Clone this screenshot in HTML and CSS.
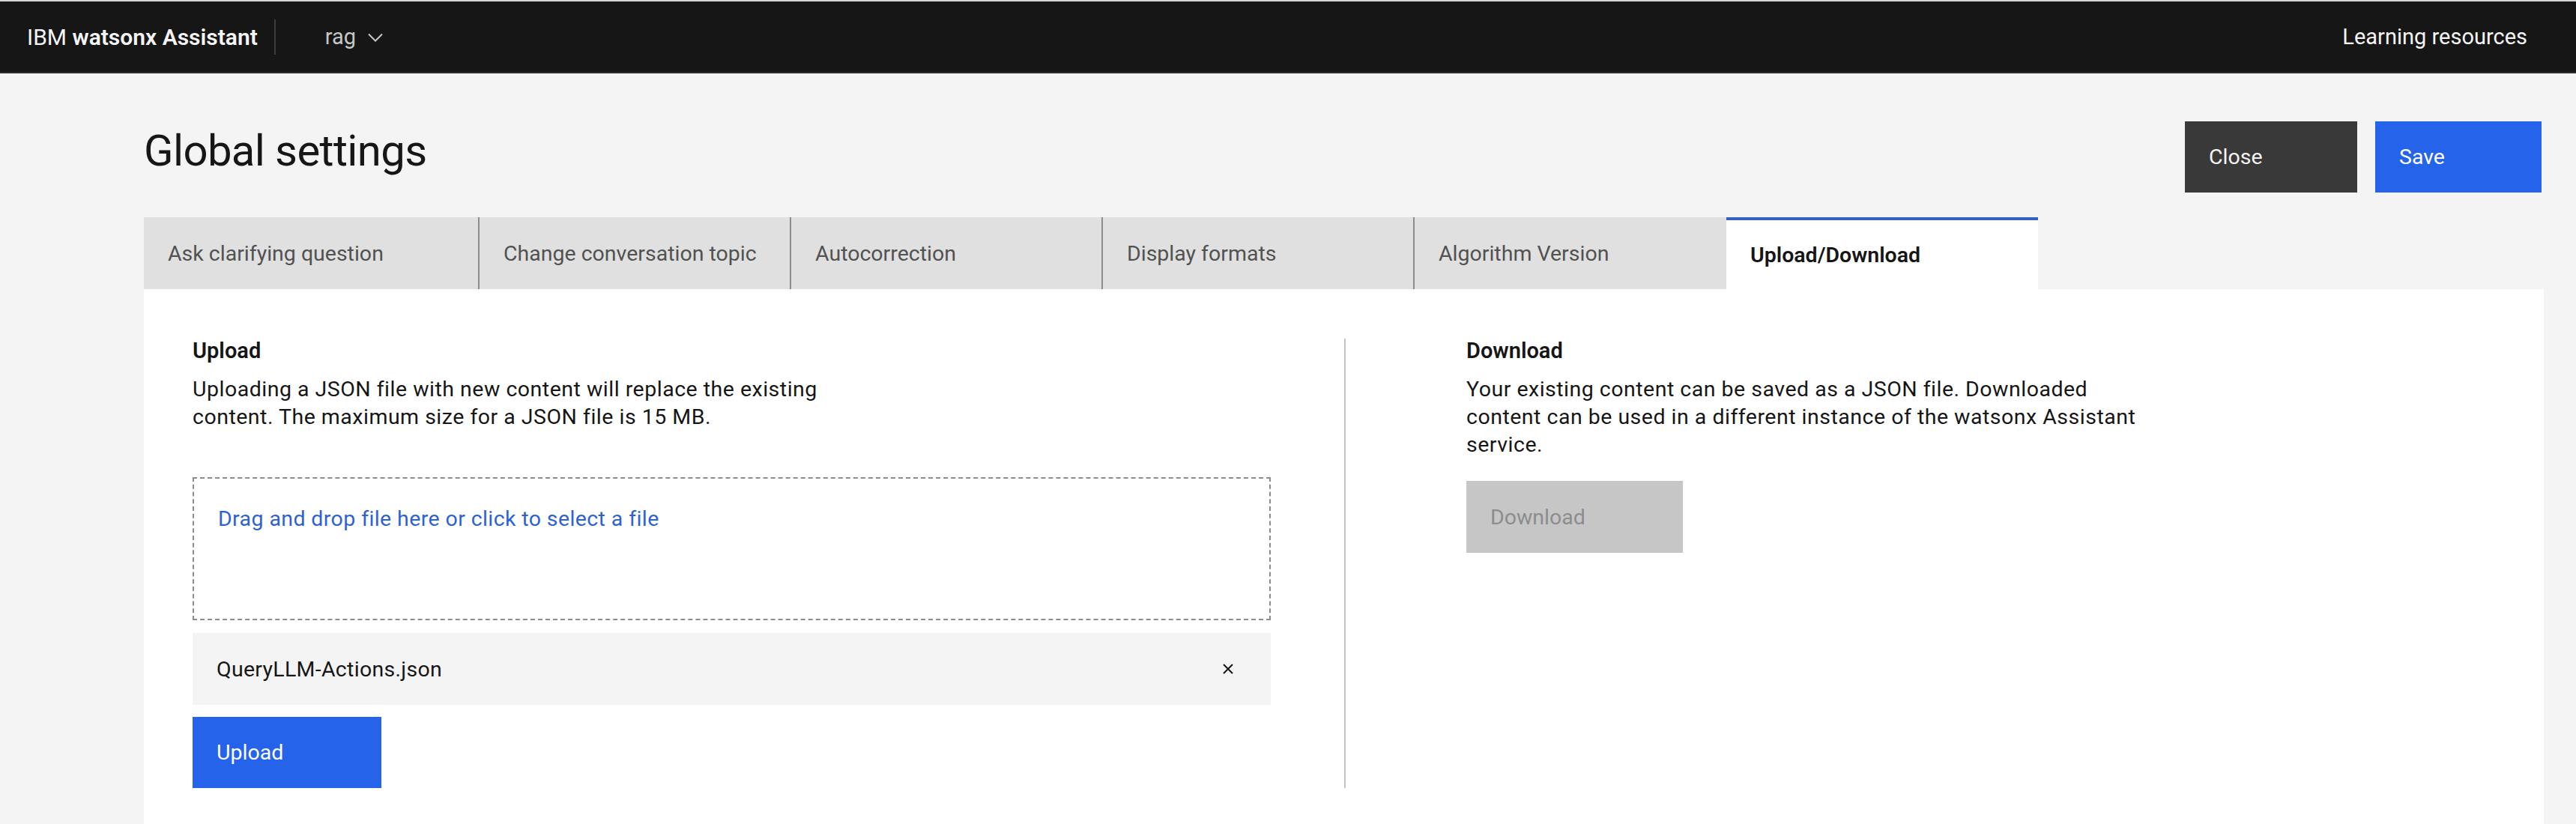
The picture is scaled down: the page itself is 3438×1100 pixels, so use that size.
FILE: index.html
```html
<!DOCTYPE html>
<html lang="en">
<head>
<meta charset="utf-8">
<title>Global settings</title>
<link rel="stylesheet" href="styles.css">
</head>
<body>
<header class="topbar">
  <div class="brand"><span class="brand-ibm">IBM</span> <span class="brand-name">watsonx Assistant</span></div>
  <div class="brand-divider"></div>
  <div class="instance">rag
    <svg class="chev" width="20" height="12" viewBox="0 0 20 12"><polyline points="1,1.5 10,10.5 19,1.5" fill="none" stroke="#c6c6c6" stroke-width="2"/></svg>
  </div>
  <div class="spacer"></div>
  <div class="learn">Learning resources</div>
</header>
<main class="page">
  <div class="page-head">
    <h1 class="title">Global settings</h1>
    <div class="actions">
      <button class="btn btn-dark">Close</button>
      <button class="btn btn-primary btn-save">Save</button>
    </div>
  </div>
  <nav class="tabs">
    <div class="tab tab-first">Ask clarifying question</div>
    <div class="tab">Change conversation topic</div>
    <div class="tab">Autocorrection</div>
    <div class="tab">Display formats</div>
    <div class="tab tab-last">Algorithm Version</div>
    <div class="tab tab-active">Upload/Download</div>
  </nav>
  <section class="panel">
    <div class="col col-upload">
      <h2 class="sec-title">Upload</h2>
      <p class="sec-text">Uploading a JSON file with new content will replace the existing content. The maximum size for a JSON file is 15 MB.</p>
      <div class="dropzone"><span class="drop-link">Drag and drop file here or click to select a file</span></div>
      <div class="file-item">
        <span class="file-name">QueryLLM-Actions.json</span>
        <svg class="file-x" width="18" height="18" viewBox="0 0 18 18"><path d="M3 3 L15 15 M15 3 L3 15" stroke="#161616" stroke-width="2" fill="none"/></svg>
      </div>
      <button class="btn btn-primary btn-upload">Upload</button>
    </div>
    <div class="col col-download">
      <h2 class="sec-title">Download</h2>
      <p class="sec-text">Your existing content can be saved as a JSON file. Downloaded content can be used in a different instance of the watsonx Assistant service.</p>
      <button class="btn btn-disabled">Download</button>
    </div>
  </section>
</main>
</body>
</html>
```
FILE: styles.css
```css
* { box-sizing: border-box; }
html, body { margin: 0; padding: 0; }
body {
  background: #f4f4f4;
  font-family: Roboto, "Liberation Sans", Arial, sans-serif;
  color: #161616;
  border-top: 2px solid #d6d6d6;
  overflow: hidden;
}
.topbar {
  height: 96px;
  background: #161616;
  border-bottom: 2px solid #2e2e2e;
  display: flex;
  align-items: center;
  color: #f4f4f4;
}
.brand {
  padding-left: 36px;
  font-size: 30px;
  color: #f4f4f4;
  white-space: nowrap;
}
.brand-name { font-weight: 600; }
.brand-divider {
  width: 2px;
  height: 47px;
  background: #3d3d3d;
  margin-left: 22px;
}
.instance {
  margin-left: 66px;
  font-size: 29px;
  color: #c6c6c6;
  display: flex;
  align-items: center;
  gap: 16px;
}
.chev { margin-top: 2px; }
.spacer { flex: 1; }
.learn {
  font-size: 29px;
  color: #f4f4f4;
  padding: 0 65px 0 33px;
  height: 96px;
  display: flex;
  align-items: center;
}
.page {
  padding: 64px 43px 0 192px;
}
.page-head {
  display: flex;
  justify-content: space-between;
  align-items: flex-start;
}
.title {
  margin: 10px 0 0 0;
  font-size: 58px;
  font-weight: 400;
  line-height: 58px;
  letter-spacing: -0.6px;
}
.actions {
  display: flex;
  gap: 24px;
  margin-right: 3px;
}
.btn {
  border: 0;
  height: 95px;
  font-family: inherit;
  font-size: 28.5px;
  text-align: left;
  padding: 0 32px;
  display: flex;
  align-items: center;
  cursor: pointer;
}
.btn-dark { background: #393939; color: #f4f4f4; width: 230px; }
.btn-primary { background: #2563eb; color: #ffffff; }
.btn-save { width: 222px; }
.tabs {
  display: flex;
  margin-top: 33px;
  height: 96px;
}
.tab {
  width: 416px;
  height: 96px;
  background: #e0e0e0;
  color: #525252;
  font-size: 28.5px;
  padding: 0 32px;
  display: flex;
  align-items: center;
  border-right: 2px solid #8d8d8d;
  white-space: nowrap;
}
.tab-first { width: 448px; }
.tab-last { border-right: 0; }
.tab-active {
  background: #ffffff;
  color: #161616;
  font-weight: 600;
  border-right: 0;
  border-top: 4px solid #3461c1;
}
.panel {
  background: #ffffff;
  display: flex;
  padding: 66px 0 200px 0;
}
.col { display: flex; flex-direction: column; align-items: flex-start; }
.col-upload {
  width: 1602px;
  padding: 0 98px 0 65px;
}
.col-download {
  flex: 1;
  border-left: 2px solid #c6c6c6;
  padding-left: 161px;
}
.sec-title {
  margin: 0;
  font-size: 29px;
  font-weight: 600;
  line-height: 32px;
}
.sec-text {
  margin: 17px 0 0 0;
  font-size: 28.5px;
  letter-spacing: 0.5px;
  line-height: 37px;
  max-width: 900px;
}
.dropzone {
  margin-top: 62px;
  width: 100%;
  height: 191px;
  border: 2px dashed #8d8d8d;
  padding: 38px 32px 0 32px;
}
.drop-link {
  color: #2d62d6;
  font-size: 28.5px;
  letter-spacing: 0.4px;
  line-height: 32px;
}
.file-item {
  margin-top: 17px;
  width: 100%;
  height: 96px;
  background: #f4f4f4;
  display: flex;
  align-items: center;
  justify-content: space-between;
  padding: 0 48px 0 32px;
}
.file-name { font-size: 28.5px; letter-spacing: 0.3px; }
.btn-upload { margin-top: 16px; width: 252px; }
.btn-disabled {
  margin-top: 30px;
  width: 289px;
  height: 96px;
  background: #c6c6c6;
  color: #8d8d8d;
  cursor: not-allowed;
}
```
